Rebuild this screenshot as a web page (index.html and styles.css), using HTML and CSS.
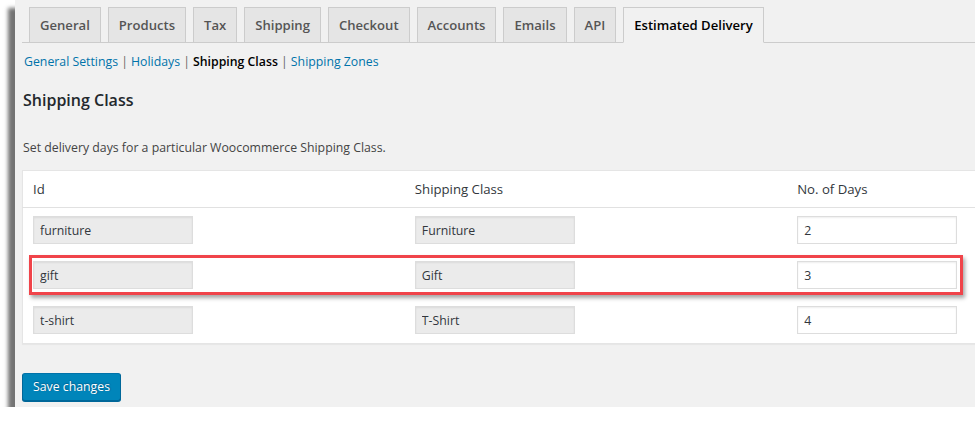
FILE: index.html
```html
<!DOCTYPE html>
<html>
<head>
  <title>Estimated Delivery - Shipping Class</title>
  <link rel="stylesheet" href="styles.css">
</head>
<body>
  <div class="screen">
    <div class="wrap">
      <nav class="nav-tab-wrapper">
        <a class="nav-tab" href="#">General</a>
        <a class="nav-tab" href="#">Products</a>
        <a class="nav-tab" href="#">Tax</a>
        <a class="nav-tab" href="#">Shipping</a>
        <a class="nav-tab" href="#">Checkout</a>
        <a class="nav-tab" href="#">Accounts</a>
        <a class="nav-tab" href="#">Emails</a>
        <a class="nav-tab" href="#">API</a>
        <a class="nav-tab nav-tab-active" href="#">Estimated Delivery</a>
      </nav>

      <ul class="subsubsub">
        <li><a href="#">General Settings</a> |</li>
        <li><a href="#">Holidays</a> |</li>
        <li><a class="current" href="#">Shipping Class</a> |</li>
        <li><a href="#">Shipping Zones</a></li>
      </ul>

      <h2>Shipping Class</h2>
      <p class="description">Set delivery days for a particular Woocommerce Shipping Class.</p>

      <table class="widefat">
        <thead>
          <tr>
            <th>Id</th>
            <th>Shipping Class</th>
            <th>No. of Days</th>
          </tr>
        </thead>
        <tbody>
          <tr>
            <td><input type="text" value="furniture" readonly></td>
            <td><input type="text" value="Furniture" readonly></td>
            <td><input type="text" class="days" value="2"></td>
          </tr>
          <tr>
            <td><input type="text" value="gift" readonly></td>
            <td><input type="text" value="Gift" readonly></td>
            <td><input type="text" class="days" value="3"></td>
          </tr>
          <tr>
            <td><input type="text" value="t-shirt" readonly></td>
            <td><input type="text" value="T-Shirt" readonly></td>
            <td><input type="text" class="days" value="4"></td>
          </tr>
        </tbody>
      </table>

      <p class="submit">
        <button class="button-primary" type="button">Save changes</button>
      </p>
    </div>

    <!-- highlight drawn over the gift row -->
    <div class="highlight"></div>
  </div>
</body>
</html>
```

FILE: styles.css
```css
/* Screenshot frame */
body {
  margin: 0;
  padding: 0;
  background-color: #fff;
  overflow: hidden;
  font-family: "Open Sans", "Noto Sans", sans-serif;
  font-size: 12.3px;
  color: #444;
}

.screen {
  position: relative;
  margin-left: 15px;
  width: 960px;
  height: 407px;
  background-color: #f1f1f1;
  box-shadow: -7px 8px 4px rgba(0, 0, 0, 0.55);
  overflow: hidden;
}

.wrap {
  padding-left: 7px;
  width: 1200px;
}

/* Tabs */
.nav-tab-wrapper {
  display: flex;
  padding-top: 7px;
  border-bottom: 1px solid #ccc;
}

.nav-tab {
  margin-left: 7px;
  margin-bottom: -1px;
  padding: 5px 10px;
  line-height: 24px;
  font-size: 13.1px;
  font-weight: 600;
  color: #555;
  text-decoration: none;
  background-color: #e5e5e5;
  border: 1px solid #ccc;
}

.nav-tab-active {
  color: #000;
  background-color: #f1f1f1;
  border-bottom-color: #f1f1f1;
}

/* Sub links */
.subsubsub {
  display: flex;
  list-style: none;
  margin: 9px 0 0;
  padding: 0 0 0 2px;
  line-height: 20px;
  color: #666;
}

.subsubsub li {
  margin-right: 3px;
}

.subsubsub a {
  color: #0073aa;
  text-decoration: none;
}

.subsubsub a.current {
  color: #000;
  font-weight: 600;
}

h2 {
  margin: 18px 0 0;
  padding-left: 1px;
  font-size: 16px;
  font-weight: 600;
  line-height: 20px;
  color: #23282d;
}

.description {
  margin: 28px 0 0;
  padding-left: 1px;
  line-height: 20px;
  color: #444;
}

/* Table */
.widefat {
  margin-top: 12px;
  width: 1148px;
  border-collapse: collapse;
  background-color: #fff;
  border: 1px solid #e5e5e5;
  box-shadow: 0 1px 1px rgba(0, 0, 0, 0.04);
  table-layout: fixed;
}

.widefat th {
  text-align: left;
  font-weight: 400;
  font-size: 13.2px;
  line-height: 20px;
  padding: 8px 10px;
  color: #32373c;
  border-bottom: 1px solid #e1e1e1;
}

.widefat td {
  padding: 8px 10px 9px;
}

.widefat input {
  box-sizing: border-box;
  width: 160px;
  height: 28px;
  padding: 0 6px;
  font-family: inherit;
  font-size: 12.3px;
  color: #32373c;
  background-color: #ebebeb;
  border: 1px solid #ddd;
  box-shadow: inset 0 1px 2px rgba(0, 0, 0, 0.07);
  outline: none;
}

.widefat input.days {
  background-color: #fff;
}

/* Button */
.submit {
  margin: 29px 0 0;
}

.button-primary {
  height: 28px;
  padding: 0 10px 1px;
  font-family: inherit;
  font-size: 12.3px;
  line-height: 26px;
  color: #fff;
  background-color: #0085ba;
  border: 1px solid #0073aa;
  border-color: #0073aa #006799 #006799;
  border-radius: 3px;
  box-shadow: 0 1px 0 #006799;
  text-shadow: 0 -1px 1px #006799, 1px 0 1px #006799;
  cursor: pointer;
}

/* Red annotation box */
.highlight {
  position: absolute;
  left: 14px;
  top: 255px;
  width: 934px;
  height: 40px;
  box-sizing: border-box;
  border: 3px solid #f0444a;
  box-shadow: 2px 3px 4px rgba(0, 0, 0, 0.35);
}
```
